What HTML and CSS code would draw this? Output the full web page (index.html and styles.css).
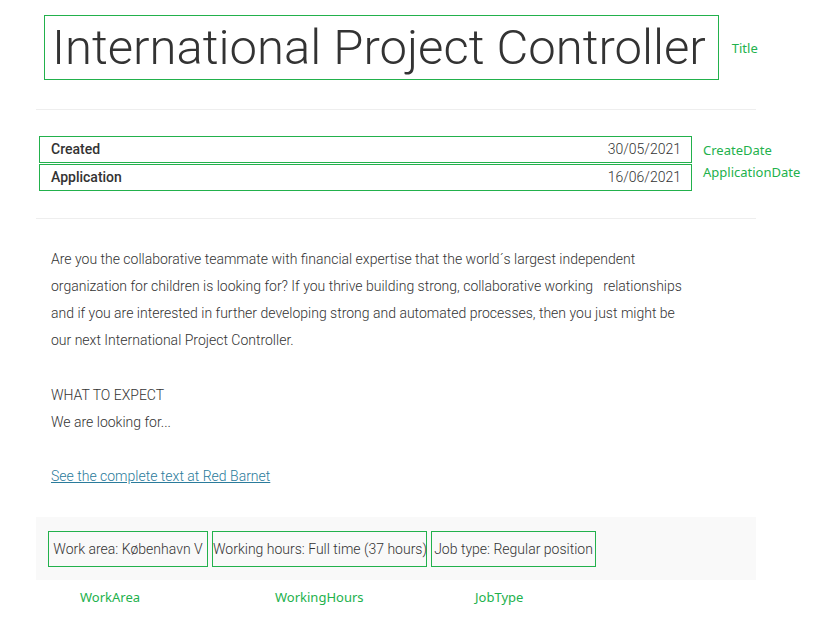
FILE: index.html
```html
<!DOCTYPE html>
<html lang="en">
<head>
<meta charset="utf-8">
<title>International Project Controller</title>
<link rel="stylesheet" href="styles.css">
</head>
<body>
<main class="page">
  <header class="heading">
    <h1 class="title marked">International Project Controller</h1>
    <span class="note">Title</span>
  </header>
  <section class="dates">
    <div class="date-row">
      <div class="date marked"><strong>Created</strong><time datetime="2021-05-30">30/05/2021</time></div>
      <span class="note">CreateDate</span>
    </div>
    <div class="date-row">
      <div class="date marked"><strong>Application</strong><time datetime="2021-06-16">16/06/2021</time></div>
      <span class="note note-raised">ApplicationDate</span>
    </div>
  </section>
  <article class="description">
    <p>Are you the collaborative teammate with financial expertise that the world´s largest independent<br>
    organization for children is looking for? If you thrive building strong, collaborative working &nbsp; relationships<br>
    and if you are interested in further developing strong and automated processes, then you just might be<br>
    our next International Project Controller.</p>
    <p>WHAT TO EXPECT<br>We are looking for...</p>
    <p><a class="link" href="#">See the complete text at Red Barnet</a></p>
  </article>
  <footer class="facts">
    <div class="fact marked">Work area: København V</div>
    <div class="fact marked">Working hours: Full time (37 hours)</div>
    <div class="fact marked">Job type: Regular position</div>
  </footer>
  <div class="fact-notes">
    <span class="note">WorkArea</span>
    <span class="note">WorkingHours</span>
    <span class="note">JobType</span>
  </div>
</main>
</body>
</html>
```
FILE: styles.css
```css
* {
  box-sizing: border-box;
}

body {
  margin: 0;
  background: #fff;
  color: #333;
  font: 300 14px/27px Roboto, "Liberation Sans", sans-serif;
}

.page {
  max-width: 840px;
  padding: 15px 34px 12px 36px;
}

.marked {
  border: 1px solid #22b14c;
}

.note {
  color: #22b14c;
  font: 400 13px/20px "Noto Sans", "Open Sans", sans-serif;
}

.heading {
  display: flex;
  align-items: center;
  gap: 13px;
  padding-left: 8px;
}

.title {
  margin: 0;
  padding: 0 12px 0 7px;
  font-size: 49px;
  font-weight: 300;
  line-height: 63px;
  white-space: nowrap;
}

.dates {
  margin-top: 29px;
  margin-right: 47px;
  padding: 26px 0 27px 3px;
  border: solid #eee;
  border-width: 1px 0;
}

.date-row {
  display: grid;
  grid-template-columns: 1fr 100px;
  gap: 11px;
  align-items: center;
  margin-right: -47px;
}

.date-row + .date-row {
  margin-top: 1px;
}

.date {
  display: flex;
  justify-content: space-between;
  padding: 0 10px 0 11px;
  line-height: 25px;
}

.date strong {
  font-weight: 500;
}

.note-raised {
  align-self: start;
  line-height: 16px;
}

.description {
  padding: 27px 0 27px 15px;
}

.description p {
  margin: 0 0 27px;
}

.description p:first-child {
  margin-bottom: 28px;
}

.description p:last-child {
  margin-bottom: 0;
}

.link {
  color: #2a7b9b;
}

.facts,
.fact-notes {
  display: grid;
  grid-template-columns: 160px 215px 165px;
  column-gap: 4px;
  margin-right: 47px;
}

.facts {
  padding: 14px 0 13px 12px;
  background: #f9f9f9;
}

.fact {
  line-height: 34px;
  text-align: center;
  white-space: nowrap;
}

.fact-notes {
  grid-template-columns: 191px 196px auto;
  padding: 7px 0 0 44px;
}
```
